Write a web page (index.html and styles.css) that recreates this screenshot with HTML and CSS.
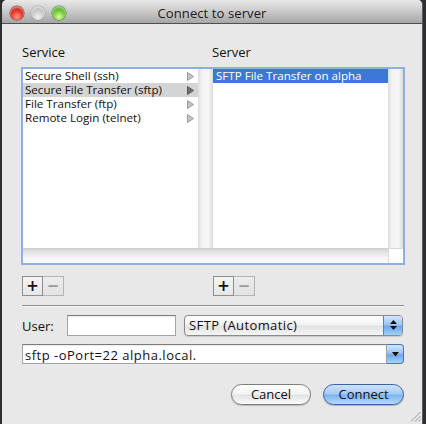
FILE: index.html
```html
<!DOCTYPE html>
<html>
<head>
<meta charset="utf-8">
<link rel="stylesheet" href="styles.css">
</head>
<body>
<div class="window">
  <div class="titlebar">
    <div class="lights">
      <span class="light red"></span>
      <span class="light grey"></span>
      <span class="light green"></span>
    </div>
    <div class="title">Connect to server</div>
    <div></div>
  </div>
  <div class="content">
    <div class="labels">
      <span class="label service">Service</span>
      <span class="label">Server</span>
    </div>
    <div class="browser">
      <div class="columns">
        <div class="col">
          <div class="row"><span>Secure Shell (ssh)</span><svg class="arrow" width="7" height="9" viewBox="0 0 7 9"><polygon points="0.5,0.5 6.5,4.5 0.5,8.5" fill="#c4c4c4" stroke="#9a9a9a" stroke-width="1"/></svg></div>
          <div class="row sel-grey"><span>Secure File Transfer (sftp)</span><svg class="arrow" width="7" height="9" viewBox="0 0 7 9"><polygon points="0.5,0.5 6.5,4.5 0.5,8.5" fill="#6e6e6e" stroke="#5a5a5a" stroke-width="1"/></svg></div>
          <div class="row"><span>File Transfer (ftp)</span><svg class="arrow" width="7" height="9" viewBox="0 0 7 9"><polygon points="0.5,0.5 6.5,4.5 0.5,8.5" fill="#c4c4c4" stroke="#9a9a9a" stroke-width="1"/></svg></div>
          <div class="row"><span>Remote Login (telnet)</span><svg class="arrow" width="7" height="9" viewBox="0 0 7 9"><polygon points="0.5,0.5 6.5,4.5 0.5,8.5" fill="#c4c4c4" stroke="#9a9a9a" stroke-width="1"/></svg></div>
        </div>
        <div class="vscroll"></div>
        <div class="col col2">
          <div class="row sel-blue"><span>SFTP File Transfer on alpha</span></div>
        </div>
        <div class="vscroll"></div>
      </div>
      <div class="hbar">
        <div class="hscroll"></div>
        <div class="corner"></div>
      </div>
    </div>
    <div class="addrow">
      <div class="seg">
        <span class="segbtn plus">+</span><span class="segbtn minus">&minus;</span>
      </div>
      <div class="seg">
        <span class="segbtn plus">+</span><span class="segbtn minus">&minus;</span>
      </div>
    </div>
    <div class="sep"></div>
    <div class="userrow">
      <span class="userlabel">User:</span>
      <span class="textfield user"></span>
      <div class="popup">
        <span class="popuptext">SFTP (Automatic)</span>
        <span class="stepper">
          <svg width="9" height="12" viewBox="0 0 9 12"><polygon points="4.5,1 8,5 1,5" fill="#111"/><polygon points="1,7 8,7 4.5,11" fill="#111"/></svg>
        </span>
      </div>
    </div>
    <div class="cmdrow">
      <span class="textfield cmd">sftp -oPort=22 alpha.local.</span>
      <span class="combobtn">
        <svg width="9" height="6" viewBox="0 0 9 6"><polygon points="1,1 8,1 4.5,5.5" fill="#111"/></svg>
      </span>
    </div>
    <div class="btnrow">
      <span class="pill cancel">Cancel</span>
      <span class="pill connect">Connect</span>
    </div>
    <div class="griprow">
      <svg width="11" height="11" viewBox="0 0 11 11"><line x1="10.5" y1="1" x2="1" y2="10.5" stroke="#9a9a9a" stroke-width="1"/><line x1="10.5" y1="5" x2="5" y2="10.5" stroke="#9a9a9a" stroke-width="1"/><line x1="10.5" y1="8.5" x2="8.5" y2="10.5" stroke="#9a9a9a" stroke-width="1"/></svg>
    </div>
  </div>
</div>
</body>
</html>
```

FILE: styles.css
```css
* { box-sizing: border-box; }
html, body {
  margin: 0;
  padding: 0;
}
body {
  width: 426px;
  height: 424px;
  overflow: hidden;
  background: #2e2e30;
  font-family: "Open Sans", "DejaVu Sans", sans-serif;
  color: #111;
}
.window {
  margin-left: 2px;
  width: 421px;
  height: 424px;
  background: #e8e8e8;
  border-radius: 5px 5px 0 0;
  border-right: 1px solid #5a5a5a;
  overflow: hidden;
}
.titlebar {
  height: 24px;
  display: grid;
  grid-template-columns: 1fr auto 1fr;
  align-items: center;
  background: linear-gradient(#e9e9e9, #c9c9c9 50%, #a6a6a6);
  border-bottom: 1px solid #4f4f4f;
}
.lights {
  display: flex;
  gap: 7px;
  padding-left: 8px;
  padding-top: 3px;
}
.light {
  width: 14px;
  height: 14px;
  border-radius: 50%;
  display: block;
}
.red {
  background: radial-gradient(circle at 50% 78%, #ff9c8a 0%, #e8372a 45%, #b0130c 80%, #7a0a06 100%);
  box-shadow: inset 0 2px 2px rgba(255,255,255,0.5), 0 0 0 0.5px #7a2a20;
}
.grey {
  background: radial-gradient(circle at 50% 78%, #f0f0f0 0%, #c8c8c8 50%, #9c9c9c 100%);
  box-shadow: inset 0 2px 2px rgba(255,255,255,0.6), 0 0 0 0.5px #8a8a8a;
}
.green {
  background: radial-gradient(circle at 50% 78%, #d8ff9a 0%, #79cc3a 45%, #3f9a1a 80%, #2a6a10 100%);
  box-shadow: inset 0 2px 2px rgba(255,255,255,0.5), 0 0 0 0.5px #3a6a20;
}
.title {
  font-size: 13px;
  color: #1a1a1a;
  padding-top: 3px;
  letter-spacing: 0.1px;
}
.content {
  padding: 0 18px 0 19px;
  display: flex;
  flex-direction: column;
}
.labels {
  display: flex;
  margin-top: 20px;
  height: 17px;
  line-height: 17px;
  font-size: 13px;
}
.label.service {
  width: 191px;
  padding-left: 1px;
}
.browser {
  margin-top: 6px;
  width: 384px;
  height: 198px;
  border: 2px solid #8db0de;
  background: #fff;
  display: flex;
  flex-direction: column;
}
.columns {
  display: flex;
  height: 179px;
}
.col {
  width: 175px;
  background: #fff;
}
.row {
  height: 14px;
  display: flex;
  align-items: center;
  justify-content: space-between;
  font-size: 11.6px;
  line-height: 14px;
  padding-left: 2px;
  padding-right: 4px;
  white-space: nowrap;
}
.col2 .row { padding-left: 3px; }
.arrow { display: block; }
.sel-grey { background: #d4d4d4; }
.sel-blue { background: #3d78d7; color: #fff; }
.vscroll {
  width: 15px;
  background: linear-gradient(to right, #dcdcdc 0%, #f2f2f2 25%, #f6f6f6 70%, #dadada 100%);
}
.hbar {
  display: flex;
  height: 15px;
}
.hscroll {
  flex: 1;
  background: linear-gradient(#cfcfcf 0%, #e8e8e8 35%, #f7f7f7 70%, #fdfdfd 100%);
}
.corner {
  width: 15px;
  background: #fff;
  border-top: 1px solid #d8d8d8;
  border-left: 1px solid #d8d8d8;
}
.addrow {
  display: flex;
  margin-top: 11px;
  padding-left: 1px;
}
.seg {
  display: flex;
  width: 191px;
}
.segbtn {
  width: 21px;
  height: 20px;
  display: flex;
  align-items: center;
  justify-content: center;
  font-family: "DejaVu Sans", sans-serif;
  font-weight: bold;
  font-size: 15px;
  border: 1px solid #a8a8a8;
  background: linear-gradient(#f4f4f4, #e6e6e6);
}
.segbtn.plus { color: #111; border-color: #8e8e8e; }
.segbtn.minus { color: #9a9a9a; border-left: none; background: linear-gradient(#ececec, #e2e2e2); border-color: #b4b4b4; }
.sep {
  margin-top: 9px;
  margin-left: 1px;
  width: 382px;
  height: 2px;
  border-top: 1px solid #8e8e8e;
  border-bottom: 1px solid #f4f4f4;
}
.userrow {
  margin-top: 7px;
  padding-left: 1px;
  display: flex;
  align-items: center;
  height: 22px;
}
.userlabel {
  font-size: 13px;
  width: 45px;
  padding-top: 2px;
}
.textfield {
  display: flex;
  align-items: center;
  background: #fff;
  border: 1px solid #a4a4a4;
  border-top-color: #7c7c7c;
  box-shadow: inset 0 1px 1px rgba(0,0,0,0.08);
}
.textfield.user {
  width: 109px;
  height: 21px;
  margin-top: 1px;
}
.popup {
  margin-left: 8px;
  width: 219px;
  height: 21px;
  display: flex;
  border: 1px solid #8a8a8a;
  border-radius: 4px;
  overflow: hidden;
  background: linear-gradient(#ffffff 0%, #f2f2f2 45%, #e2e2e2 55%, #f6f6f6 100%);
  box-shadow: 0 1px 1px rgba(0,0,0,0.15);
}
.popuptext {
  flex: 1;
  font-size: 13px;
  line-height: 19px;
  padding-left: 4px;
  letter-spacing: 0.4px;
}
.stepper {
  width: 19px;
  display: flex;
  align-items: center;
  justify-content: center;
  border-left: 1px solid #5b7fb8;
  background: linear-gradient(#d4e6fb 0%, #9cc5f4 45%, #6ea7ec 55%, #9fd0fb 100%);
}
.stepper svg { display: block; }
.cmdrow {
  margin-top: 8px;
  padding-left: 1px;
  display: flex;
  height: 20px;
}
.textfield.cmd {
  width: 365px;
  height: 20px;
  font-size: 13px;
  letter-spacing: 0.5px;
  padding-left: 2px;
  padding-top: 1px;
}
.combobtn {
  width: 17px;
  height: 20px;
  display: flex;
  align-items: center;
  justify-content: center;
  border: 1px solid #4f73b0;
  border-left: none;
  border-radius: 0 4px 4px 0;
  background: linear-gradient(#d4e6fb 0%, #9cc5f4 45%, #6ea7ec 55%, #a4d4fd 100%);
}
.btnrow {
  margin-top: 20px;
  display: flex;
  justify-content: flex-end;
  gap: 12px;
  padding-right: 0;
}
.pill {
  height: 21px;
  border-radius: 11px;
  display: flex;
  align-items: center;
  justify-content: center;
  font-size: 13px;
  line-height: 19px;
}
.cancel {
  width: 80px;
  border: 1px solid #7e7e7e;
  background: linear-gradient(#ffffff 0%, #f4f4f4 45%, #e4e4e4 55%, #fafafa 100%);
  box-shadow: 0 1px 1px rgba(0,0,0,0.2);
}
.connect {
  width: 81px;
  border: 1px solid #3e62a6;
  background: linear-gradient(#cfe3fc 0%, #a6cbf5 45%, #7db4f0 55%, #b4dcff 100%);
  box-shadow: 0 1px 1px rgba(0,0,0,0.25);
}
.griprow {
  display: flex;
  justify-content: flex-end;
  margin-top: 6px;
  margin-right: -17px;
}
.griprow svg { display: block; }
```
